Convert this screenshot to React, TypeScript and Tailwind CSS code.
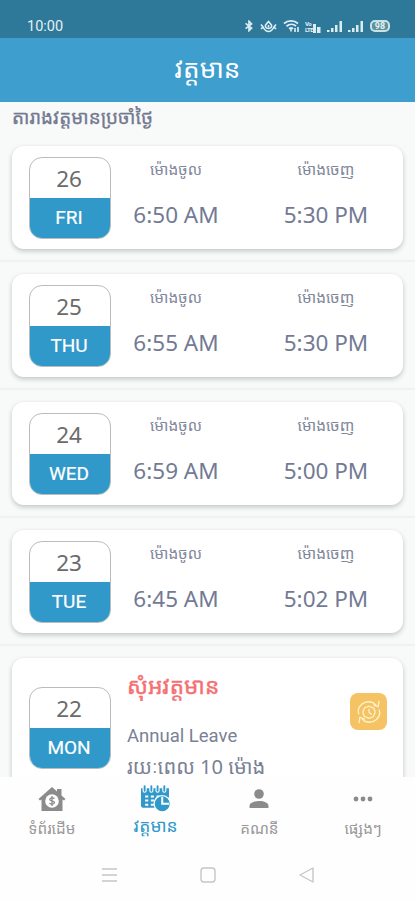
import React from "react";

const khmer = "font-['Noto_Sans_Khmer','Khmer_OS','Noto_Sans','DejaVu_Sans',sans-serif]";

const days = [
  { date: "26", day: "FRI", in: "6:50 AM", out: "5:30 PM" },
  { date: "25", day: "THU", in: "6:55 AM", out: "5:30 PM" },
  { date: "24", day: "WED", in: "6:59 AM", out: "5:00 PM" },
  { date: "23", day: "TUE", in: "6:45 AM", out: "5:02 PM" },
];

function Khmer({ children, className = "" }: { children: React.ReactNode; className?: string }) {
  return <span className={`block whitespace-nowrap ${khmer} ${className}`}>{children}</span>;
}

function DateBox({ date, day }: { date: string; day: string }) {
  return (
    <div className="h-[82px] w-[82px] shrink-0 overflow-hidden rounded-[13px] border border-[#b9bcbd] bg-white text-center">
      <div className="h-10 pr-[2px] font-['Noto_Sans',sans-serif] text-[22.5px] leading-[42px] text-[#6b6b6b]">{date}</div>
      <div className="h-10 bg-[#3099c9] pr-[2px] font-[Roboto,sans-serif] text-[19px] leading-[40px] text-white [-webkit-text-stroke:0.2px_white]">
        {day}
      </div>
    </div>
  );
}

function Time({ label, value, className }: { label: string; value: string; className: string }) {
  return (
    <div className={`flex flex-col items-center ${className}`}>
      <Khmer className="mt-[14px] h-5 text-[15.4px] leading-5 text-[#81879b]">{label}</Khmer>
      <span className="mt-[19px] whitespace-nowrap font-['Noto_Sans',sans-serif] text-[22.5px] leading-8 text-[#737a94]">
        {value}
      </span>
    </div>
  );
}

function Signal() {
  return (
    <svg width="17" height="13" viewBox="0 0 17 13" fill="#d9edf3">
      <path d="M1 10h2.500v2H1zM5 8h2.500v4H5zM9 5h2.500v7H9zM13.500 1h2.500v11h-2.500z" />
    </svg>
  );
}

function StatusBar() {
  return (
    <div className="flex h-[38px] shrink-0 items-center bg-[#2e7899] pl-[27px] pr-[25px] pt-[14px] text-[#e3f0f5]">
      <span className="pt-px font-[Roboto,sans-serif] text-[14.5px] leading-4">10:00</span>
      <div className="ml-auto flex items-center">
        <svg width="10" height="12" viewBox="0 0 10 14" fill="none" stroke="#dceef4" strokeWidth="1.900">
          <path d="M1 4l7 5.500-3 3V1.500l3 3L1 10" />
        </svg>
        <svg className="ml-[6px]" width="17" height="13" viewBox="0 0 17 13" fill="none" stroke="#dceef4" strokeWidth="1.600">
          <path d="M1 4.500l2 2.500-2 2M16 4.500L14 7l2 2M3 7c3 6 8 6 11 0" />
          <path d="M8.500 1.500L5.500 5v2c1 2 5 2 6 0V5z" />
          <path d="M8.500 5v2.500" />
        </svg>
        <svg className="ml-[6px]" width="17" height="14" viewBox="0 0 17 14" fill="none" stroke="#dceef4" strokeWidth="1.900">
          <path d="M1 4.500c4-3.500 10-3.500 14 0M3.500 7.200c3-2.500 7-2.500 9.500 0M6 9.800c1.500-1 3-1 4 0" />
          <path d="M8 10v2.500M12 9v4M15 8v5" strokeWidth="1.600" />
        </svg>
        <div className="ml-[5px] flex h-[13px] w-4 items-end font-[Roboto,sans-serif] font-bold">
          <span className="w-[8px] text-[6px] leading-[6px] tracking-[-0.5px]">Vo<br />LTE</span>
          <svg width="8" height="9" viewBox="0 0 8 9" fill="#d9edf3">
            <path d="M0 0h3v9H0zM4 3h3.500v6H4z" />
          </svg>
        </div>
        <span className="ml-[5px]"><Signal /></span>
        <span className="ml-[4px]"><Signal /></span>
        <div className="ml-[6px] flex h-3 w-[20px] items-center justify-center rounded-[5px] border-2 border-[#c9e2e6] bg-[#5f919a] font-[Roboto,sans-serif] text-[9px] font-bold leading-none">
          98
        </div>
      </div>
    </div>
  );
}

function HomeIcon() {
  return (
    <svg width="28" height="26" viewBox="0 0 28 26">
      <path d="M14 1L0.500 13l1.500 1.500 1.500-1V25h21V13.500l1.500 1 1.500-1.500-4-3.500V3H19v2.500z" fill="#8b8b8b" />
      <circle cx="14" cy="15" r="6.800" fill="#fff" />
      <path d="M16.500 12.700c-.7-1-4.700-1.300-4.700.8 0 2 4.700 1 4.700 3.100s-4 2-5 .6M14 10v10" fill="none" stroke="#8b8b8b" strokeWidth="1.300" />
    </svg>
  );
}

function CalendarIcon() {
  return (
    <svg width="29" height="27" viewBox="0 0 28 26">
      <path d="M0 3h1.500v2.500a2 2 0 004 0V3H8v2.500a2 2 0 004 0V3h2v2.500a2 2 0 004 0V3h2.500v2.500a2 2 0 004 0V3H27v10H14v9H2q-2 0-2-2z" fill="#3099c9" />
      <path d="M3.500 1v4.500M10 1v4.500M16 1v4.500M22.500 1v4.500" stroke="#3099c9" strokeWidth="1.800" strokeLinecap="round" />
      <path d="M4 10h3v2H4zM9.500 10h3v2h-3zM15 10h3v2h-3zM4 14h3v2H4zM9.500 14h3v2h-3zM4 18h3v2H4zM9.500 18h3v2h-3z" fill="#fff" />
      <circle cx="20.500" cy="18" r="8.500" fill="#fff" />
      <circle cx="20.500" cy="18" r="7.200" fill="#3099c9" />
      <path d="M20.500 11.500V18H27" fill="none" stroke="#fff" strokeWidth="1.900" />
    </svg>
  );
}

function Tab({ label, icon, active }: { label: string; icon: React.ReactNode; active?: boolean }) {
  return (
    <div className="flex w-[103.75px] flex-col items-center">
      <div className="mt-2 flex h-[27px] items-center">{icon}</div>
      <Khmer className={`h-6 leading-6 ${active ? "mt-px text-[17.5px] text-[#3099c9]" : "mt-[4px] text-[15.3px] text-[#9a9a9a]"}`}>
        {label}
      </Khmer>
    </div>
  );
}

export default function App() {
  return (
    <div className="flex h-[900px] w-[415px] flex-col overflow-hidden bg-[#f8faf9]">
      <StatusBar />
      <header className="flex h-16 shrink-0 items-center justify-center bg-[#3e9ecd] pb-[5px]">
        <Khmer className="text-[26.2px] leading-[40px] text-white">វត្តមាន</Khmer>
      </header>
      <main className="flex h-[675px] shrink-0 flex-col overflow-hidden">
        <h1 className="h-8 shrink-0 pl-3">
          <Khmer className="text-[18.9px] leading-[30px] text-[#747990] [-webkit-text-stroke:0.3px_#747990]">តារាងវត្តមានប្រចាំថ្ងៃ</Khmer>
        </h1>
        {days.map((d) => (
          <section key={d.date} className="h-32 shrink-0 border-b-2 border-[#eff2f2] px-3 pt-3">
            <div className="flex h-[103px] rounded-[12px] bg-white pl-[17px] pt-[11px] shadow-[0_2px_5px_rgba(0,0,0,0.22)]">
              <DateBox date={d.date} day={d.day} />
              <Time label="ម៉ោងចូល" value={d.in} className="-mt-[11px] ml-[16px] w-[98px]" />
              <Time label="ម៉ោងចេញ" value={d.out} className="-mt-[11px] ml-[52px] w-[98px]" />
            </div>
          </section>
        ))}
        <section className="shrink-0 px-3 pt-3">
          <div className="flex h-[160px] rounded-[12px] bg-white pl-[17px] shadow-[0_2px_5px_rgba(0,0,0,0.22)]">
            <div className="pt-[29px]"><DateBox date="22" day="MON" /></div>
            <div className="ml-4 w-[223px] pt-[12px]">
              <Khmer className="h-8 text-[22.6px] leading-8 text-[#f56f73] [-webkit-text-stroke:0.4px_#f56f73]">សុំអវត្តមាន</Khmer>
              <p className="mt-[20px] font-[Roboto,sans-serif] text-[18.5px] leading-7 text-[#7a8195]">Annual Leave</p>
              <Khmer className="mt-px text-[20.1px] leading-8 text-[#7a8195]">រយៈពេល 10 ម៉ោង</Khmer>
            </div>
            <div className="mt-[35px] flex h-[37px] w-[37px] items-center justify-center rounded-[8px] bg-[#f6c364]">
              <svg width="24" height="24" viewBox="0 0 25 25" fill="none" stroke="#fff3cd" strokeWidth="1.300">
                <path d="M2 15C-1 7 8-1 17 3l3 2.500M23 10c3 8-6 16-15 12l-3-2.500M23 1l-1 6-5-2M2 24l1-6 5 2" />
                <path d="M12.500 6.500l5 2 1.500 4-2 5-4.500 1.500-5-2-1.500-4.500 2-4.500z" />
                <path d="M12.500 9v4l3 2" />
              </svg>
            </div>
          </div>
        </section>
      </main>
      <nav className="flex h-[70px] shrink-0 bg-[#fefefe]">
        <Tab label="ទំព័រដើម" icon={<HomeIcon />} />
        <Tab active label="វត្តមាន" icon={<CalendarIcon />} />
        <Tab
          label="គណនី"
          icon={
            <svg width="20" height="20" viewBox="0 0 20 20" fill="#8b8b8b">
              <circle cx="10" cy="5" r="4.800" />
              <path d="M0.500 19v-2c0-3 4-5 9.500-5s9.500 2 9.500 5v2z" />
            </svg>
          }
        />
        <Tab
          label="ផ្សេងៗ"
          icon={
            <svg width="20" height="6" viewBox="0 0 20 6" fill="#8b8b8b">
              <circle cx="3" cy="3" r="2.400" />
              <circle cx="10" cy="3" r="2.400" />
              <circle cx="17" cy="3" r="2.400" />
            </svg>
          }
        />
      </nav>
      <footer className="flex h-[53px] shrink-0 items-center justify-center gap-[81px] bg-[#fefefe] pt-[2px]">
        <svg width="18" height="18" viewBox="0 0 18 18" fill="none" stroke="#c6c6c6" strokeWidth="1.400">
          <path d="M2 3h15M2 9h15M2 15h15" />
        </svg>
        <svg width="18" height="18" viewBox="0 0 18 18" fill="none" stroke="#c6c6c6" strokeWidth="1.400">
          <rect x="2" y="2" width="14" height="14" rx="3" />
        </svg>
        <svg width="18" height="18" viewBox="0 0 18 18" fill="none" stroke="#c6c6c6" strokeWidth="1.400" strokeLinejoin="round">
          <path d="M15 2v14L2 9z" />
        </svg>
      </footer>
    </div>
  );
}
